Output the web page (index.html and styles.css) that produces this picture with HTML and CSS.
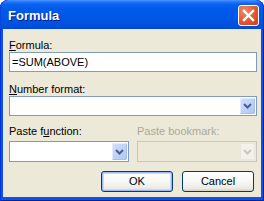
FILE: index.html
```html
<!DOCTYPE html>
<html>
<head>
<meta charset="utf-8">
<link rel="stylesheet" href="styles.css">
</head>
<body>
<div class="window">
  <div class="titlebar">
    <span class="title">Formula</span>
    <div class="close">
      <svg width="13" height="13" viewBox="0 0 13 13"><path d="M2 2 L11 11 M11 2 L2 11" stroke="#fff" stroke-width="2.4" stroke-linecap="square" fill="none"/></svg>
    </div>
  </div>
  <div class="client">
    <div class="lbl"><u>F</u>ormula:</div>
    <div class="textbox">=SUM(ABOVE)</div>
    <div class="lbl gap-number"><u>N</u>umber format:</div>
    <div class="combo">
      <span class="dd"><svg width="9" height="6" viewBox="0 0 9 6"><path d="M1 1 L4.5 4.5 L8 1" stroke="#4d6185" stroke-width="2" fill="none"/></svg></span>
    </div>
    <div class="row">
      <div class="col">
        <div class="lbl">Paste f<u>u</u>nction:</div>
        <div class="combo tall">
          <span class="dd"><svg width="9" height="6" viewBox="0 0 9 6"><path d="M1 1 L4.5 4.5 L8 1" stroke="#4d6185" stroke-width="2" fill="none"/></svg></span>
        </div>
      </div>
      <div class="col disabled">
        <div class="lbl">Paste bookmark:</div>
        <div class="combo tall">
          <span class="dd"><svg width="9" height="6" viewBox="0 0 9 6"><path d="M1 1 L4.5 4.5 L8 1" stroke="#c9c7ba" stroke-width="2" fill="none"/></svg></span>
        </div>
      </div>
    </div>
    <div class="buttons">
      <div class="btn default">OK</div>
      <div class="btn">Cancel</div>
    </div>
  </div>
</div>
</body>
</html>
```
FILE: styles.css
```css
html, body {
  margin: 0;
  padding: 0;
  background: #ffffff;
}
.window {
  width: 264px;
  height: 201px;
  display: flex;
  flex-direction: column;
  background: #0756e3;
  border-radius: 8px 8px 0 0;
  overflow: hidden;
  box-shadow: inset 1px 0 #0831d9, inset -1px 0 #001ea0, inset 0 -1px #001ea0;
  font-family: "Liberation Sans", Arial, sans-serif;
  font-size: 11px;
  color: #000;
}
.titlebar {
  height: 29px;
  flex: none;
  display: flex;
  align-items: center;
  justify-content: space-between;
  padding: 0 5px 0 8px;
  background: linear-gradient(#4a97ff 0px, #2276f8 2px, #0c62f0 4px, #005aea 9px, #0056e6 18px, #0052de 25px, #0048d4 29px);
  border-radius: 8px 8px 0 0;
  box-shadow: inset 1px 0 #0b45d6, inset -1px 0 #0032b8;
}
.title {
  color: #fff;
  font-weight: bold;
  font-size: 13px;
  text-shadow: 1px 1px #0a1883;
  padding-top: 1px;
}
.close {
  width: 19px;
  height: 19px;
  border: 1px solid #fff;
  border-radius: 3px;
  background: radial-gradient(circle at 30% 25%, #ee8b6a 0%, #e0582e 55%, #c8401a 100%);
  display: flex;
  align-items: center;
  justify-content: center;
  margin-top: 2px;
}
.client {
  flex: 1;
  margin: 0 3px 4px 3px;
  background: #ece9d8;
  padding: 10px 4px 0 6px;
  display: flex;
  flex-direction: column;
}
.lbl {
  height: 13px;
  line-height: 13px;
  white-space: nowrap;
}
.gap-number {
  margin-top: 11px;
}
.textbox {
  height: 18px;
  line-height: 18px;
  border: 1px solid #7f9db9;
  background: #fff;
  padding-left: 2px;
}
.combo {
  position: relative;
  height: 18px;
  border: 1px solid #7f9db9;
  background: #fff;
}
.combo.tall {
  height: 19px;
  margin-top: 3px;
}
.dd {
  position: absolute;
  right: 1px;
  top: 1px;
  bottom: 1px;
  width: 15px;
  border-radius: 2px;
  background: linear-gradient(135deg, #d3e0fd 0%, #bfd2fb 50%, #b0c6f6 100%);
  box-shadow: inset -1px -1px #a9bdec, inset 1px 1px #e3ebfe;
  display: flex;
  align-items: center;
  justify-content: center;
}
.row {
  display: flex;
  gap: 8px;
  margin-top: 9px;
}
.col {
  width: 120px;
  display: flex;
  flex-direction: column;
}
.disabled .lbl {
  color: #aca899;
}
.disabled .combo {
  border-color: #c9c7ba;
  background: #ece9d8;
}
.disabled .dd {
  background: #f2f1ea;
  box-shadow: inset 0 0 0 1px #e8e6dc;
}
.buttons {
  display: flex;
  justify-content: flex-end;
  gap: 9px;
  margin-top: 9px;
  padding-right: 3px;
}
.btn {
  width: 70px;
  height: 19px;
  line-height: 19px;
  text-align: center;
  border: 1px solid #003c74;
  border-radius: 3px;
  background: linear-gradient(#ffffff 0%, #f7f7f4 50%, #ecebe6 85%, #d6d0c5 100%);
}
.btn.default {
  box-shadow: inset 0 0 0 1px #9cb7f3, inset 0 0 0 2px #c9dafc;
}
```
